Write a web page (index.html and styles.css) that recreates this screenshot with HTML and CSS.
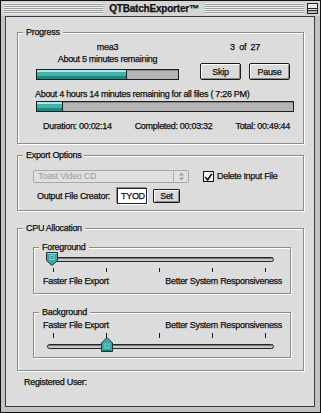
FILE: index.html
```html
<!DOCTYPE html>
<html lang="en">
<head>
    <meta charset="UTF-8">
    <title>QTBatchExporter</title>
    <link rel="stylesheet" href="styles.css">
</head>
<body>
    <div class="window">
        <div class="titlebar">
            <div class="stripes"></div>
            <span class="title">QTBatchExporter™</span>
            <div class="stripes"></div>
            <span class="collapse"></span>
        </div>

        <div class="content">
            <!-- Progress -->
            <div class="group progress">
                <span class="legend">Progress</span>
                <div class="progress-top">
                    <div class="file-col">
                        <div class="line">mea3</div>
                        <div class="line second">About 5 minutes remaining</div>
                        <div class="bar short"><div class="fill" style="width: 64%"></div></div>
                    </div>
                    <div class="count-col">
                        <div class="line">3 &nbsp;of &nbsp;27</div>
                        <div class="buttons">
                            <button class="btn">Skip</button>
                            <button class="btn">Pause</button>
                        </div>
                    </div>
                </div>
                <div class="line all-label">About 4 hours 14 minutes remaining for all files ( 7:26 PM)</div>
                <div class="bar long"><div class="fill" style="width: 10%"></div></div>
                <div class="stats">
                    <span>Duration: 00:02:14</span>
                    <span>Completed: 00:03:32</span>
                    <span>Total: 00:49:44</span>
                </div>
            </div>

            <!-- Export Options -->
            <div class="group export">
                <span class="legend">Export Options</span>
                <div class="row1">
                    <div class="popup disabled">
                        <span class="popup-text">Toast Video CD</span>
                        <span class="popup-arrows">
                            <svg width="7" height="9" viewBox="0 0 7 9">
                                <path d="M3.5 0.5 L6 3.5 H1 Z M3.5 8.5 L6 5.5 H1 Z" fill="#9a9a9a"/>
                            </svg>
                        </span>
                    </div>
                    <span class="checkbox">
                        <svg width="11" height="11" viewBox="0 0 11 11">
                            <path d="M1.5 5 L4.5 8.5 L9.5 1" fill="none" stroke="#111" stroke-width="2"/>
                        </svg>
                    </span>
                    <span class="check-label">Delete Input File</span>
                </div>
                <div class="row2">
                    <span class="field-label">Output File Creator:</span>
                    <span class="textfield">TYOD</span>
                    <button class="btn set">Set</button>
                </div>
            </div>

            <!-- CPU Allocation -->
            <div class="group cpu">
                <span class="legend">CPU Allocation</span>

                <div class="group sub fg">
                    <span class="legend">Foreground</span>
                    <div class="slider">
                        <div class="track-row">
                            <div class="track"></div>
                            <svg class="thumb down" width="12" height="14" viewBox="0 0 12 14">
                                <path d="M0.5 0.5 H11.5 V8.5 L6 13.5 L0.5 8.5 Z" fill="#3fa7a1" stroke="#163836"/>
                                <path d="M1.5 1.5 H10.5" stroke="#9fe3de"/>
                                <rect x="4" y="3.5" width="4" height="4" fill="none" stroke="#7fcfca"/>
                            </svg>
                        </div>
                        <div class="ticks"><i></i><i></i><i></i><i></i><i></i></div>
                    </div>
                    <div class="scale-labels">
                        <span>Faster File Export</span>
                        <span>Better System Responsiveness</span>
                    </div>
                </div>

                <div class="group sub bg">
                    <span class="legend">Background</span>
                    <div class="scale-labels">
                        <span>Faster File Export</span>
                        <span>Better System Responsiveness</span>
                    </div>
                    <div class="slider">
                        <div class="ticks"><i></i><i></i><i></i><i></i><i></i></div>
                        <div class="track-row">
                            <div class="track"></div>
                            <svg class="thumb up" width="12" height="15" viewBox="0 0 12 15">
                                <path d="M0.5 14.5 H11.5 V6 L6 0.5 L0.5 6 Z" fill="#3fa7a1" stroke="#163836"/>
                                <path d="M1.5 13.5 H10.5" stroke="#256e6a"/>
                                <rect x="4" y="7" width="4" height="4" fill="none" stroke="#7fcfca"/>
                            </svg>
                        </div>
                    </div>
                </div>
            </div>

            <div class="registered">Registered User:</div>
        </div>
    </div>
</body>
</html>
```

FILE: styles.css
```css
* {
    margin: 0;
    padding: 0;
    box-sizing: border-box;
}

body {
    background-color: #ffffff;
    font-family: 'Liberation Sans', Arial, sans-serif;
    font-size: 9px;
    letter-spacing: -0.3px;
    color: #111;
    -webkit-text-stroke: 0.25px #111;
}

.window {
    width: 321px;
    height: 413px;
    border: 1px solid #111;
    background-color: #c2c2c2;
    padding: 0 5px 5px 4px;
    display: flex;
    flex-direction: column;
}

/* title bar */
.titlebar {
    height: 15px;
    margin: 0 -5px 0 -4px;
    padding: 0 2px 0 3px;
    display: flex;
    align-items: center;
    background-color: #d4d4d4;
}

.stripes {
    flex: 1;
    height: 11px;
    background: repeating-linear-gradient(to bottom, #f2f2f2 0 1px, #9a9a9a 1px 2px);
}

.title {
    padding: 0 6px;
    font-weight: bold;
    font-size: 10px;
    letter-spacing: -0.2px;
    line-height: 13px;
}

.collapse {
    width: 11px;
    height: 11px;
    margin-left: 3px;
    border: 1px solid #222;
    background: linear-gradient(to bottom, #e8e8e8 0 4px, #222 4px 5px, #e8e8e8 5px 6px, #222 6px 7px, #bbb 7px);
}

/* content */
.content {
    flex: 1;
    border: 1px solid #3a3a3a;
    background-color: #dcdcdc;
    padding: 0 10px 0 11px;
}

.group {
    position: relative;
    border: 1px solid #8c8c8c;
    box-shadow: inset 1px 1px 0 #fff, 1px 1px 0 #fff;
}

.legend {
    position: absolute;
    top: -6px;
    left: 5px;
    padding: 0 3px;
    background-color: #dcdcdc;
    line-height: 10px;
    white-space: nowrap;
}

.line {
    line-height: 11px;
    height: 11px;
    white-space: nowrap;
}

/* progress */
.progress {
    margin-top: 15px;
    height: 112px;
}

.progress-top {
    display: flex;
    padding-top: 9px;
}

.file-col {
    width: 143px;
    margin-left: 18px;
    display: flex;
    flex-direction: column;
    align-items: center;
}

.file-col .second {
    margin-top: 1px;
}

.count-col {
    width: 90px;
    margin-left: 21px;
    display: flex;
    flex-direction: column;
    align-items: center;
}

.buttons {
    display: flex;
    gap: 8px;
    margin-top: 10px;
}

.btn {
    width: 41px;
    height: 17px;
    border: 1px solid #1a1a1a;
    border-radius: 2px;
    background-color: #dadada;
    box-shadow: inset 1px 1px 0 #fff, inset -1px -1px 0 #8a8a8a;
    font-family: inherit;
    font-size: 9px;
    letter-spacing: -0.3px;
    color: #111;
    -webkit-text-stroke: 0.25px #111;
}

.bar {
    height: 11px;
    border: 1px solid #1e1e1e;
    background: linear-gradient(to bottom, #8c8c8c 0 1px, #b4b4b4 1px);
}

.bar .fill {
    height: 100%;
    background: linear-gradient(to bottom, #a8ecea 0 2px, #45b1ad 2px 6px, #2a8480 6px);
    border-right: 1px solid #1e1e1e;
}

.bar.short {
    width: 143px;
    margin-top: 4px;
}

.all-label {
    margin-top: 9px;
    padding-left: 17px;
}

.bar.long {
    width: 258px;
    margin: 1px 0 0 18px;
}

.stats {
    display: flex;
    justify-content: space-between;
    margin-top: 9px;
    padding: 0 13px 0 25px;
    line-height: 11px;
}

/* export options */
.export {
    margin-top: 11px;
    height: 56px;
}

.row1 {
    display: flex;
    align-items: center;
    margin-top: 14px;
    padding-left: 15px;
}

.popup {
    width: 156px;
    height: 13px;
    display: flex;
    align-items: center;
    border: 1px solid #a8a8a8;
    border-radius: 2px;
    background-color: #e0e0e0;
}

.popup-text {
    flex: 1;
    padding-left: 4px;
    color: #9c9c9c;
    -webkit-text-stroke: 0;
    line-height: 11px;
}

.popup-arrows {
    width: 15px;
    height: 100%;
    border-left: 1px solid #b0b0b0;
    display: flex;
    align-items: center;
    justify-content: center;
}

.checkbox {
    width: 11px;
    height: 11px;
    margin-left: 14px;
    border: 1px solid #111;
    background-color: #f4f4f4;
    display: flex;
}

.check-label {
    margin-left: 3px;
    line-height: 11px;
}

.row2 {
    display: flex;
    align-items: center;
    margin-top: 5px;
    padding-left: 19px;
}

.field-label {
    width: 80px;
    line-height: 11px;
}

.textfield {
    width: 30px;
    height: 16px;
    padding: 2px 0 0 3px;
    border: 1px solid #222;
    background-color: #fff;
    box-shadow: -1px -1px 0 #8a8a8a, 1px 1px 0 #fff;
    line-height: 11px;
}

.btn.set {
    width: 27px;
    height: 14px;
    margin-left: 6px;
    border-radius: 1px;
}

/* cpu allocation */
.cpu {
    margin-top: 17px;
    height: 143px;
}

.sub {
    width: 258px;
    margin: 18px 0 0 15px;
}

.sub.fg {
    height: 47px;
}

.sub.bg {
    height: 46px;
}

.slider {
    width: 227px;
    margin-left: 13px;
}

.fg .slider {
    padding-top: 5px;
}

.track-row {
    position: relative;
    height: 12px;
    display: flex;
    align-items: center;
}

.track {
    width: 100%;
    height: 5px;
    border: 1px solid #262626;
    border-radius: 3px;
    background: linear-gradient(to bottom, #777 0 1px, #c8c8c8 1px);
}

.thumb {
    position: absolute;
    display: block;
}

.thumb.down {
    left: -1px;
    top: -1px;
}

.thumb.up {
    left: 54px;
    top: -3px;
}

.ticks {
    display: flex;
    justify-content: space-between;
    height: 4px;
    padding: 0 8px 0 6px;
    margin-top: 3px;
}

.bg .ticks {
    height: 5px;
    margin-bottom: 2px;
}

.ticks i {
    width: 1px;
    background-color: #1a1a1a;
}

.scale-labels {
    display: flex;
    justify-content: space-between;
    padding: 0 8px 0 9px;
    margin-top: 4px;
    line-height: 10px;
    white-space: nowrap;
}

.bg .scale-labels {
    margin-top: 7px;
    margin-bottom: 3px;
}

.registered {
    margin-top: 6px;
    padding-left: 7px;
    line-height: 11px;
}
```
